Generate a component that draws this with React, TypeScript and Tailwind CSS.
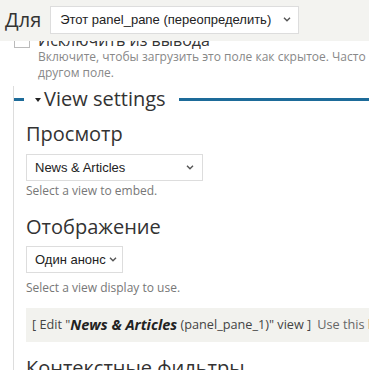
import React from "react";

const sans = "font-['Open_Sans',sans-serif]";
const arial = "font-['Liberation_Sans',Arial,sans-serif]";

function Chevron() {
	return (
		<svg width="8" height="5" viewBox="0 0 8 5" className="shrink-0">
			<path d="M1 0.8l3 3 3-3" fill="none" stroke="#555" strokeWidth="1.4" />
		</svg>
	);
}

function FakeSelect({ value, className }: { value: string; className: string }) {
	return (
		<div className={`flex items-center justify-between border border-[#ddd] bg-white text-[13px] text-[#222] ${arial} ${className}`}>
			<span className="whitespace-nowrap">{value}</span>
			<Chevron />
		</div>
	);
}

export default function App() {
	return (
		<div className={`relative h-[370px] w-[369px] overflow-hidden bg-white ${sans}`}>
			{/* sticky override bar */}
			<div className="absolute left-0 top-0 z-10 flex h-[41px] w-full items-center bg-[#f3f3f0] pl-[5px]">
				<span className="-mt-[2px] text-[20px] leading-none text-[#333]">Для</span>
				<FakeSelect value="Этот panel_pane (переопределить)" className="ml-[9px] h-[28px] w-[249px] pl-[9px] pr-[7px] -mt-[2px]" />
			</div>

			<div className="pt-[30px]">
				<div className="flex items-start pl-[14px]">
					<div className="mt-[2px] h-[16px] w-[16px] border border-[#bbb] bg-white"></div>
					<span className="ml-[8px] text-[16px] leading-[20px] text-[#333]">Исключить из вывода</span>
				</div>
				<div className="mt-[-1px] pl-[38px] text-[12px] leading-[16px] text-[#888] whitespace-nowrap">
					Включите, чтобы загрузить это поле как скрытое. Часто
					<br />
					другом поле.
				</div>

				<div className="ml-[13px] mt-[5px] border-l border-[#ddd] pb-[40px]">
					<div className="flex h-[26px] items-center">
						<div className="h-[3px] w-[10px] bg-[#1d6b99]"></div>
						<span className="ml-[11px] mt-[2px] h-0 w-0 border-x-[3px] border-t-[4px] border-x-transparent border-t-[#222]"></span>
						<span className="ml-[3px] text-[20px] leading-[26px] text-[#333]">View settings</span>
						<div className="ml-[13px] h-[3px] flex-1 bg-[#1d6b99]"></div>
					</div>

					<div className="pl-[12px]">
						<div className="mt-[9px] text-[20px] leading-[26px] text-[#333]">Просмотр</div>
						<FakeSelect value="News & Articles" className="mt-[7px] h-[27px] w-[177px] pl-[8px] pr-[8px]" />
						<div className="mt-[2px] text-[12px] leading-[16px] text-[#777]">Select a view to embed.</div>

						<div className="mt-[15px] text-[20px] leading-[26px] text-[#333]">Отображение</div>
						<FakeSelect value="Один анонс" className="mt-[6px] h-[27px] w-[97px] pl-[8px] pr-[5px]" />
						<div className="mt-[7px] text-[12px] leading-[16px] text-[#777]">Select a view display to use.</div>

						<div className="mt-[12px] flex h-[34px] items-center whitespace-nowrap bg-[#f2f2ee] pl-[6px] text-[12.7px] text-[#444]">
							<span>[ Edit "</span>
							<span className="text-[14.5px] font-bold italic text-[#222]">News &amp; Articles</span>
							<span>&nbsp;(panel_pane_1)" view ]</span>
							<span className="ml-[6px] text-[#666]">Use this link to edit</span>
						</div>

						<div className="mt-[13px] text-[20px] leading-[26px] text-[#333] whitespace-nowrap">Контекстные фильтры</div>
					</div>
				</div>
			</div>
		</div>
	);
}
